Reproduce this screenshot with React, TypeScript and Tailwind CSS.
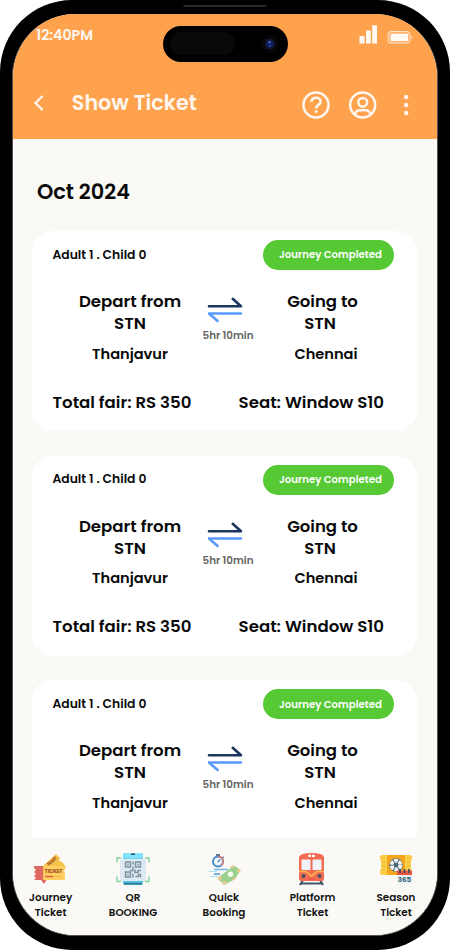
import React from "react";

function StatusBar() {
  return (
    <div className="flex h-[48px] items-start justify-between pr-[23px] pl-[23px] text-white">
      <span className="mt-[11px] text-[14.200px] leading-[20px] font-semibold text-[#fff7ef]">12:40PM</span>
      <svg className="mt-[10px]" width="56" height="22" viewBox="358 24 56 22">
        <g fill="#fff" fillOpacity=".95">
          <rect x="359.5" y="36" width="5" height="7.5" />
          <rect x="366" y="30.5" width="4.8" height="13" />
          <rect x="372.2" y="25.3" width="4.8" height="18.2" />
          <rect x="390.5" y="33.8" width="17.5" height="7.2" rx="1" />
        </g>
        <rect x="388" y="31.5" width="22" height="11.7" rx="3" fill="#fff" fillOpacity=".2" stroke="#fff" strokeOpacity=".65" />
        <path d="M411.300 35.500q2.500 1.800 0 3.800z" fill="#fff" fillOpacity=".7" />
      </svg>
    </div>
  );
}

function Header() {
  return (
    <header className="h-[125px] shrink-0 bg-[#ffa24e]">
      <StatusBar />
      <div className="flex h-[82px] items-center text-[#fff7ef]">
        <svg className="ml-[20px]" width="12" height="18" viewBox="0 0 12 18" fill="none" stroke="currentColor" strokeWidth="2.300">
          <path d="M9.600 2L2.500 9l7.100 7" />
        </svg>
        <h1 className="ml-[26.800px] text-[20.700px] leading-[30px] font-semibold whitespace-nowrap">Show Ticket</h1>
        <svg className="mt-[3px] mr-[24px] ml-auto" width="112" height="30" viewBox="301 90 112 30" fill="none" stroke="#fff7ef" strokeWidth="2.500">
          <circle cx="316" cy="105" r="12.500" />
          <path d="M311.400 101.800c.4-5.400 9.200-5.300 9.200 0 0 3.300-4.500 2.900-4.500 6.700" />
          <circle cx="316.100" cy="111.500" r="1.500" fill="#fff7ef" stroke="none" />
          <circle cx="362.700" cy="105" r="12.500" />
          <circle cx="362.700" cy="102.300" r="4.400" />
          <path d="M355 114.600c.5-3 2.500-4.300 5.200-4.300h5c2.700 0 4.700 1.300 5.200 4.300" />
          <g fill="#fff7ef" stroke="none">
            <circle cx="406.200" cy="97" r="2.200" />
            <circle cx="406.200" cy="105" r="2.200" />
            <circle cx="406.200" cy="113" r="2.200" />
          </g>
        </svg>
      </div>
    </header>
  );
}

function TicketCard({ collapsed = false }: { collapsed?: boolean }) {
  return (
    <article className="h-[200px] shrink-0 rounded-[21px] bg-white pt-[9px]">
      <div className="flex h-[30px] items-center justify-between pr-[23px] pl-[20.500px]">
        <span className="text-[12.350px] font-semibold whitespace-nowrap">Adult 1 . Child 0</span>
        <span className="flex h-[30px] w-[131px] items-center justify-center rounded-full bg-[#56c935] pl-[4px] text-[10.200px] font-semibold whitespace-nowrap text-white">
          Journey Completed
        </span>
      </div>
      <div className="mt-[21px] flex h-[75px] text-center">
        <div className="ml-[38px] w-[120px] shrink-0">
          <p className="text-[16.600px] leading-[22.300px] font-semibold whitespace-nowrap">Depart from<br />STN</p>
          <p className="mt-[8px] text-[14.600px] leading-[21px] font-semibold">Thanjavur</p>
        </div>
        <div className="flex w-[76px] shrink-0 flex-col items-center pt-[5px]">
          <svg className="mr-[6px]" width="36" height="27" viewBox="207 296 36 27" fill="none" strokeWidth="2.600" strokeLinecap="round">
            <path d="M209 306.300H241L232.700 298.800" stroke="#1b365f" strokeLinejoin="round" />
            <path d="M241 313.500H209L217.600 321" stroke="#589aff" strokeLinejoin="round" />
          </svg>
          <p className="mt-[5px] text-[10.300px] leading-[16px] font-semibold whitespace-nowrap text-[#666]">5hr 10min</p>
        </div>
        <div className="ml-[3px] w-[106px] shrink-0">
          <p className="pr-[4px] text-[16.500px] leading-[22.300px] font-semibold"><span className="pl-[5px]">Going to</span><br />STN</p>
          <p className="mt-[8px] pl-[8px] text-[14.600px] leading-[21px] font-semibold">Chennai</p>
        </div>
      </div>
      {!collapsed && (
        <div className="mt-[23.500px] flex items-center justify-between pr-[33px] pl-[20.500px] text-[16.580px] leading-[26px] font-semibold whitespace-nowrap">
          <span>Total fair: RS 350</span>
          <span>Seat: Window S10</span>
        </div>
      )}
    </article>
  );
}

function JourneyIcon() {
  return (
    <svg width="36" height="36" viewBox="1 -1 36 36">
      <path d="M10 15L24 2l4 4-1 3 3 1 4 5-8 11H10z" fill="#f6c24c" />
      <text x="16.200" y="14.300" transform="rotate(-40 16.200 14.300)" fontSize="4.400" fontWeight="800" fill="#a95d28" textLength="12">TICKET</text>
      <path d="M2 14h9v13h4l-3 5-3-4H2l2-2-2-2 2-2-2-2 2-2-2-2z" fill="#de6862" />
      <path d="M11 14h22v4l-1.500 1.500L33 21v7H11z" fill="#ffcf61" />
      <path d="M11 15v13" stroke="#d8874c" strokeWidth=".8" strokeDasharray="1.500 1.500" />
      <text x="12.600" y="20.700" fontSize="5.400" fontWeight="800" fill="#a95d28" textLength="18">TICKET</text>
      <path d="M13 24.500h8" stroke="#d86143" strokeWidth="1.500" />
      <path d="M22 24.500h8" stroke="#e2a246" strokeDasharray="1 1" />
    </svg>
  );
}

function QrIcon() {
  return (
    <svg width="36" height="36" viewBox="0 -.5 36 36">
      <rect x="8" y="1.500" width="20" height="32" rx="2" fill="#54c5e6" />
      <path d="M8 7V4q0-2.500 2.500-2.500h15Q28 1.500 28 4v3z" fill="#83e2fd" />
      <path d="M16 2h4v1.500h-4z" fill="#245068" />
      <rect x="5" y="7.500" width="26" height="22" rx="1" fill="#dfe9f3" />
      <path d="M9 32.300h18" stroke="#387f99" strokeWidth="2" />
      <path d="M2 11V6.500h4M30 6.500h4V11M2 25v5h4M30 30h4v-5" fill="none" stroke="#80d49a" strokeWidth="1.400" />
      <g fill="none" stroke="#7b929f" strokeWidth="1.400">
        <path d="M10.500 10.500h5v5h-5zM20.500 10.500h5v5h-5zM10.500 20.500h5v5h-5z" />
        <path d="M13 12v2M23 12v2M13 22v2M18 10v3M18 15v4h-3M20 18v3h3v-2h3M18 22v4M20.500 25h3v-2h2v3" />
      </g>
    </svg>
  );
}

function QuickIcon() {
  return (
    <svg width="36" height="36" viewBox="0 -.5 36 36">
      <path d="M10 3.500h4M16.500 5.500l1 1" fill="none" stroke="#68747d" strokeWidth="2.200" />
      <circle cx="12" cy="10" r="5" fill="#eef7fc" stroke="#4489c8" strokeWidth="1.900" />
      <path d="M11.700 10.500l2.500-2.500" stroke="#4489c8" strokeWidth="1.300" />
      <path d="M12 5a5 5 0 0 1 3 9" fill="none" stroke="#d97774" strokeWidth="1.500" />
      <path d="M8 18h14" stroke="#75b7e8" strokeWidth="1.400" />
      <path d="M3 20h8M4 25h8" stroke="#a6e0ef" strokeWidth="1.200" />
      <path d="M8 22.500h6" stroke="#4c95d5" strokeWidth="1.300" />
      <path d="M11.500 26.500L28 14l6.500 4.500-5.500 9-11 6z" fill="#9bd08f" />
      <path d="M11.500 26.500l3-2.500 1 4-2 2zM23.500 16l3.500-2.500 2 1.500-3 1.500zM32 17l3 1.500-2 3-2-2zM15.500 31l3-1.500 3 1.500-3.500 2zM28 25.500l2 .5-1 2-3 1.500z" fill="#f3c992" />
      <circle cx="24.500" cy="22.700" r="2.700" fill="#f6fbf3" />
    </svg>
  );
}

function TrainIcon() {
  return (
    <svg width="36" height="36" viewBox="0 0 36 36">
      <path d="M9 29l-3 5M26 29l3 5M7 32.500h21" stroke="#46576c" strokeWidth="2.200" />
      <path d="M5 6Q6 2 17.500 2T30 6v22q0 2-2 2H7q-2 0-2-2z" fill="#f36c52" />
      <rect x="14" y="3.800" width="7" height="2.200" rx="1" fill="#fff" />
      <path d="M17.500 3v3" stroke="#f36c52" />
      <rect x="7.500" y="8.500" width="9" height="10.500" rx="1" fill="#f0f2f8" />
      <rect x="18.500" y="8.500" width="9" height="10.500" rx="1" fill="#f0f2f8" />
      <path d="M5 20.500h7l5.500 4.500 5.500-4.500h7" fill="none" stroke="#fdbb4e" strokeWidth="1.500" />
      <circle cx="9.500" cy="25" r="2" fill="#435267" />
      <circle cx="25.500" cy="25" r="2" fill="#435267" />
      <path d="M14 28h7" stroke="#d94d3e" />
    </svg>
  );
}

function SeasonIcon() {
  return (
    <svg width="36" height="36" viewBox="0 0 36 36">
      <path d="M2 5l2-1h28l2 1v4l-1 1v8l1 1v4l-2 1H4l-2-1v-4l1-1v-8L2 9z" fill="#f8cf46" />
      <path d="M9 4h18v20H9z" fill="#f6a51f" />
      <path d="M4 7h3M4 11h3M4 15h3M4 19h3M29 7h3M29 11h3M29 15h3" stroke="#e9b832" />
      <circle cx="18" cy="14" r="6.800" fill="#47677a" />
      <circle cx="18" cy="14" r="4.400" fill="none" stroke="#f6f6ef" strokeWidth="3.800" strokeDasharray="3.600 1.008" />
      <rect x="19" y="19.500" width="15" height="13" fill="#e5f1f2" />
      <path d="M19 19.500h15v4.500H19z" fill="#ed5440" />
      <path d="M22 18v4M26.500 18v4M31 18v4" stroke="#354e60" strokeWidth="1.700" />
      <text x="19.800" y="31" fontSize="7" fontWeight="700" fill="#3e6876" textLength="13.400" lengthAdjust="spacingAndGlyphs">365</text>
    </svg>
  );
}

function NavItem({ icon, top, bottom, className }: { icon: React.ReactNode; top: string; bottom: string; className: string }) {
  return (
    <button className={`flex shrink-0 flex-col items-center pt-[14px] text-[10.400px] leading-[15px] font-semibold text-[#111] ${className}`}>
      {icon}
      <span className="mt-[3.400px]">{top}</span>
      <span>{bottom}</span>
    </button>
  );
}

function BottomNav() {
  return (
    <nav className="flex h-[98px] shrink-0 bg-[#faf9f6]">
      <NavItem className="ml-[7.700px] w-[60px]" icon={<JourneyIcon />} top="Journey" bottom="Ticket" />
      <NavItem className="ml-[22.300px] w-[60px]" icon={<QrIcon />} top="QR" bottom="BOOKING" />
      <NavItem className="ml-[31px] w-[60px]" icon={<QuickIcon />} top="Quick" bottom="Booking" />
      <NavItem className="ml-[28.500px] w-[60px]" icon={<TrainIcon />} top="Platform" bottom="Ticket" />
      <NavItem className="ml-[23.500px] w-[60px]" icon={<SeasonIcon />} top="Season" bottom="Ticket" />
    </nav>
  );
}

export default function App() {
  return (
    <div className="h-[950px] w-[450px] overflow-hidden bg-white font-['Poppins','Inter',sans-serif] text-[#090909]">
      <div className="relative h-[949.500px] w-[450px] rounded-[72px] bg-black px-[12px] pt-[14px]">
        <div className="flex h-[922px] w-[426px] flex-col overflow-hidden rounded-[63px] border-x border-b border-[#55524f] bg-[#faf9f6]">
          <Header />
          <main className="flex min-h-0 flex-1 flex-col overflow-hidden pr-[20px] pl-[19px]">
            <h2 className="mt-[38px] ml-[5px] text-[20.800px] leading-[30px] font-semibold">Oct 2024</h2>
            <div className="mt-[24px] flex flex-col gap-[24.600px]">
              <TicketCard />
              <TicketCard />
              <TicketCard collapsed />
            </div>
          </main>
          <BottomNav />
        </div>
        <div className="absolute top-[5px] left-[183px] h-[2px] w-[84px] rounded-b bg-[#292929]" />
        <div className="absolute top-[25.500px] left-[163px] flex h-[36.500px] w-[124.500px] items-center justify-between rounded-full bg-black pr-[8px] pl-[7px]">
          <div className="h-[23px] w-[65px] rounded-full bg-[#090909]" />
          <svg width="20" height="20" viewBox="0 0 20 20">
            <circle cx="10" cy="10" r="9.500" fill="#080509" />
            <circle cx="10" cy="10" r="5.500" fill="#10152b" />
            <circle cx="10" cy="10" r="3.500" fill="#111f62" />
            <circle cx="9.500" cy="8" r="1.300" fill="#475cb4" />
            <circle cx="10" cy="12" r="1.200" fill="#293f9b" />
          </svg>
        </div>
      </div>
    </div>
  );
}
